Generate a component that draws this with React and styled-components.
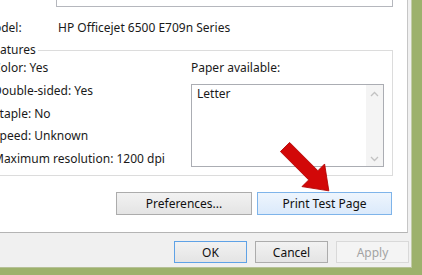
import React from 'react';
import styled, { createGlobalStyle } from 'styled-components';

const GlobalStyle = createGlobalStyle`
  html, body {
    margin: 0;
    padding: 0;
    background: #9db16c;
  }
  body {
    font-family: 'Noto Sans', 'Open Sans', sans-serif;
    font-size: 12px;
    color: #1a1a1a;
  }
`;

const Frame = styled.div`
  position: relative;
  width: 422px;
  height: 275px;
  overflow: hidden;
  background: #9db16c;
`;

const Client = styled.div`
  width: 411px;
  height: 267px;
  background: #f0f0f0;
  border-right: 1px solid #c3cca8;
  border-bottom: 1px solid #b6c197;
  display: flex;
  flex-direction: column;
`;

const TabPage = styled.div`
  margin: -36px 0 0 -25px;
  width: 433px;
  padding: 0 15px 17px 8px;
  box-sizing: border-box;
  background: #fff;
  border-right: 1px solid #c6c6c6;
  border-bottom: 1px solid #b4b4b4;
  display: flex;
  flex-direction: column;
`;

const CommentBox = styled.div`
  margin-left: 73px;
  width: 337px;
  height: 43px;
  box-sizing: border-box;
  border: 1px solid #b5b7bd;
  background: #fff;
`;

const FieldRow = styled.div`
  margin-top: 13px;
  display: grid;
  grid-template-columns: 75px 1fr;
  line-height: 16px;
`;

const GroupBox = styled.fieldset`
  margin: 6px 0 0;
  width: 410px;
  box-sizing: border-box;
  padding: 2px 8px 8px 9px;
  border: 1px solid #dcdcdc;
  display: grid;
  grid-template-columns: 198px 193px;
`;

const Legend = styled.legend`
  margin-left: -8px;
  padding: 0 2px;
  line-height: 16px;
`;

const FeatureList = styled.div`
  display: flex;
  flex-direction: column;
  gap: 6.75px;
  line-height: 16px;
`;

const PaperColumn = styled.div`
  display: flex;
  flex-direction: column;
  line-height: 16px;
`;

const ListBox = styled.div`
  margin-top: 8px;
  height: 83px;
  box-sizing: border-box;
  border: 1px solid #abadb3;
  display: flex;
`;

const ListItems = styled.div`
  flex: 1;
  padding: 1px 5px;
`;

const ScrollTrack = styled.div`
  width: 17px;
  background: #f4f4f4;
  display: flex;
  flex-direction: column;
  justify-content: space-between;
  align-items: center;
  padding: 6px 0 4px;
`;

const ButtonRow = styled.div`
  margin-top: 16px;
  display: flex;
  justify-content: flex-end;
  gap: 5px;
`;

const Footer = styled.div`
  margin-top: 8px;
  padding-right: 2px;
  display: flex;
  justify-content: flex-end;
  gap: 8px;
`;

const DialogButton = styled.button`
  width: ${({ $width }) => $width}px;
  height: ${({ $height }) => $height}px;
  box-sizing: border-box;
  padding: 0;
  font: inherit;
  color: #111;
  border: 1px solid #acacac;
  background: linear-gradient(#f2f2f2, #e4e4e4);
  ${({ $hot }) =>
    $hot &&
    `
    border-color: #7eb4ea;
    background: linear-gradient(#eef5fd, #dbeafb);
  `}
  ${({ $default }) =>
    $default &&
    `
    border-color: #5fa2e6;
  `}
  &:disabled {
    color: #a3a3a3;
    border-color: #d9d9d9;
    background: #f4f4f4;
  }
`;

const Overlay = styled.svg`
  position: absolute;
  left: 0;
  top: 0;
  pointer-events: none;
`;

const Chevron = ({ up }) => (
  <svg width="9" height="6" viewBox="0 0 9 6">
    <path
      d={up ? 'M1 5 L4.5 1.5 L8 5' : 'M1 1 L4.5 4.5 L8 1'}
      fill="none"
      stroke="#c2c2c2"
      strokeWidth="1.3"
    />
  </svg>
);

const features = [
  'Color: Yes',
  'Double-sided: Yes',
  'Staple: No',
  'Speed: Unknown',
  'Maximum resolution: 1200 dpi',
];

const App = () => (
  <Frame>
    <GlobalStyle />
    <Client>
      <TabPage>
        <CommentBox />
        <FieldRow>
          <span>Model:</span>
          <span>HP Officejet 6500 E709n Series</span>
        </FieldRow>
        <GroupBox>
          <Legend>Features</Legend>
          <FeatureList>
            {features.map((f) => (
              <span key={f}>{f}</span>
            ))}
          </FeatureList>
          <PaperColumn>
            <span>Paper available:</span>
            <ListBox>
              <ListItems>Letter</ListItems>
              <ScrollTrack>
                <Chevron up />
                <Chevron />
              </ScrollTrack>
            </ListBox>
          </PaperColumn>
        </GroupBox>
        <ButtonRow>
          <DialogButton $width={136} $height={23}>Preferences...</DialogButton>
          <DialogButton $width={135} $height={23} $hot>Print Test Page</DialogButton>
        </ButtonRow>
      </TabPage>
      <Footer>
        <DialogButton $width={73} $height={22} $default>OK</DialogButton>
        <DialogButton $width={73} $height={22}>Cancel</DialogButton>
        <DialogButton $width={73} $height={22} disabled>Apply</DialogButton>
      </Footer>
    </Client>
    <Overlay width="422" height="275" viewBox="0 0 422 275">
      <polygon
        transform="translate(285 147) rotate(45)"
        points="0,-6.5 40,-6.5 40,-16 62,0 40,16 40,6.5 0,6.5"
        fill="#d20808"
        stroke="#b00000"
        strokeWidth="0.8"
        strokeLinejoin="round"
      />
    </Overlay>
  </Frame>
);

export default App;
